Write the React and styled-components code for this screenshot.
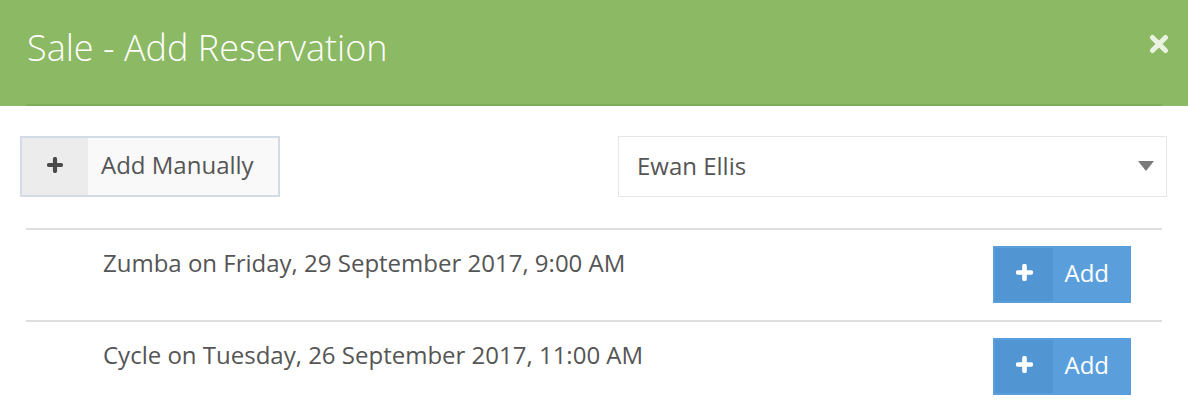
import React from "react";
import styled, { createGlobalStyle } from "styled-components";

const Global = createGlobalStyle`
  html, body { margin: 0; padding: 0; background: #fff; }
  body { font-family: "Open Sans", "Liberation Sans", sans-serif; }
  * { box-sizing: border-box; }
`;

const Modal = styled.div`
  width: 1188px;
  height: 410px;
  background: #fff;
  overflow: hidden;
`;

const Header = styled.div`
  background: #8cb963;
  height: 106px;
  padding: 0 26px;
  display: flex;
`;

const HeaderInner = styled.div`
  flex: 1;
  display: flex;
  align-items: flex-start;
  justify-content: space-between;
  border-bottom: 2px solid #80ab58;
`;

const Title = styled.h1`
  margin: 0;
  padding-top: 23px;
  padding-left: 1px;
  font-weight: 300;
  font-size: 36px;
  line-height: 50px;
  color: #fff;
`;

const Close = styled.button`
  margin-top: 33px;
  margin-right: -8px;
  width: 22px;
  height: 22px;
  padding: 0;
  border: 0;
  background: none;
  display: flex;
  align-items: center;
  justify-content: center;
  cursor: pointer;
`;

const Body = styled.div`
  padding: 30px 21px 0 20px;
`;

const TopRow = styled.div`
  display: flex;
  justify-content: space-between;
  align-items: flex-start;
`;

const SplitButton = styled.button`
  display: flex;
  align-items: stretch;
  padding: 0;
  font-family: inherit;
  cursor: pointer;
  height: ${(p) => p.$h}px;
  border: 2px solid ${(p) => (p.$primary ? "#5a9fdc" : "#d3dbe4")};
  background: ${(p) => (p.$primary ? "#5a9fdc" : "#f9f9f9")};
  color: ${(p) => (p.$primary ? "#fff" : "#555")};
`;

const IconPart = styled.span`
  width: ${(p) => p.$w}px;
  display: flex;
  align-items: center;
  justify-content: center;
  padding-bottom: 4px;
  background: ${(p) => (p.$primary ? "#5195d3" : "#ececec")};
`;

const LabelPart = styled.span`
  display: flex;
  align-items: center;
  padding: 0 ${(p) => p.$pr}px 4px ${(p) => p.$pl}px;
  font-size: 24px;
  font-weight: 400;
  line-height: 1;
`;

const Select = styled.div`
  width: 549px;
  height: 61px;
  border: 1px solid #e6e6e6;
  display: flex;
  align-items: center;
  justify-content: space-between;
  padding: 0 12px 3px 18px;
  font-size: 24px;
  color: #555;
  background: #fff;
`;

const Caret = styled.span`
  width: 0;
  height: 0;
  border-left: 8px solid transparent;
  border-right: 8px solid transparent;
  border-top: 10px solid #7b7b7b;
  margin-top: 1px;
`;

const List = styled.ul`
  list-style: none;
  margin: 31px 26px 0 26px;
  padding: 0;
`;

const Row = styled.li`
  border-top: 2px solid #dedede;
  display: flex;
  justify-content: space-between;
  align-items: flex-start;
  padding: 16px 31px 17px 77px;
`;

const RowText = styled.span`
  font-size: 24px;
  line-height: 33px;
  color: #555;
`;

const Plus = ({ color, size = 16, w = 4.4 }) => (
  <svg width={size} height={size} viewBox="0 0 16 16">
    <path
      d="M8 2 V14 M2 8 H14"
      stroke={color}
      strokeWidth={w}
      strokeLinecap="round"
      fill="none"
    />
  </svg>
);

const items = [
  "Zumba on Friday, 29 September 2017, 9:00 AM",
  "Cycle on Tuesday, 26 September 2017, 11:00 AM",
];

export default function App() {
  return (
    <Modal>
      <Global />
      <Header>
        <HeaderInner>
          <Title>Sale - Add Reservation</Title>
          <Close aria-label="close">
            <svg width="20" height="20" viewBox="0 0 20 20">
              <path
                d="M3.5 3.5 L16.5 16.5 M16.5 3.5 L3.5 16.5"
                stroke="#eaf2e3"
                strokeWidth="5"
                strokeLinecap="round"
              />
            </svg>
          </Close>
        </HeaderInner>
      </Header>
      <Body>
        <TopRow>
          <SplitButton $h={61}>
            <IconPart $w={66}>
              <Plus color="#4a4a4a" size={16} w={4.2} />
            </IconPart>
            <LabelPart $pl={13} $pr={24}>Add Manually</LabelPart>
          </SplitButton>
          <Select>
            <span>Ewan Ellis</span>
            <Caret />
          </Select>
        </TopRow>
      </Body>
      <List>
        {items.map((t) => (
          <Row key={t}>
            <RowText>{t}</RowText>
            <SplitButton $primary $h={57}>
              <IconPart $primary $w={58}>
                <Plus color="#fff" size={17} w={4.4} />
              </IconPart>
              <LabelPart $pl={11} $pr={20}>Add</LabelPart>
            </SplitButton>
          </Row>
        ))}
      </List>
    </Modal>
  );
}
